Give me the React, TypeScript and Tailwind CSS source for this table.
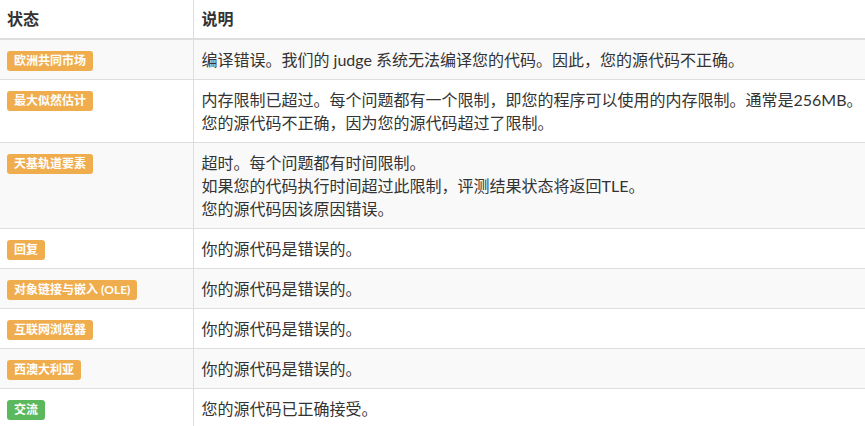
const rows = [
  { label: "欧洲共同市场", color: "bg-[#f0ad4e]", lines: ["编译错误。我们的 judge 系统无法编译您的代码。因此，您的源代码不正确。"] },
  { label: "最大似然估计", color: "bg-[#f0ad4e]", lines: ["内存限制已超过。每个问题都有一个限制，即您的程序可以使用的内存限制。通常是256MB。", "您的源代码不正确，因为您的源代码超过了限制。"] },
  { label: "天基轨道要素", color: "bg-[#f0ad4e]", lines: ["超时。每个问题都有时间限制。", "如果您的代码执行时间超过此限制，评测结果状态将返回TLE。", "您的源代码因该原因错误。"] },
  { label: "回复", color: "bg-[#f0ad4e]", lines: ["你的源代码是错误的。"] },
  { label: "对象链接与嵌入 (OLE)", color: "bg-[#f0ad4e]", lines: ["你的源代码是错误的。"] },
  { label: "互联网浏览器", color: "bg-[#f0ad4e]", lines: ["你的源代码是错误的。"] },
  { label: "西澳大利亚", color: "bg-[#f0ad4e]", lines: ["你的源代码是错误的。"] },
  { label: "交流", color: "bg-[#5cb85c]", lines: ["您的源代码已正确接受。"] },
]

function App() {
  return (
    <div className="w-[865px] h-[426px] overflow-hidden bg-white text-[#333] text-[16px] font-['Lato','Noto_Sans_CJK_SC',sans-serif]">
      <table className="w-full table-fixed border-collapse">
        <thead>
          <tr className="border-b-2 border-[#ddd]">
            <th className="w-[193px] border-r border-[#ddd] px-[7px] py-[8px] leading-[22px] text-left font-bold">状态</th>
            <th className="px-[8px] py-[8px] leading-[22px] text-left font-bold">说明</th>
          </tr>
        </thead>
        <tbody>
          {rows.map((row, i) => (
            <tr key={i} className={(i % 2 === 0 ? "bg-[#f9f9f9]" : "bg-white") + " border-b border-[#ddd]"}>
              <td className="border-r border-[#ddd] px-[7px] py-[8px] align-top">
                <span className={row.color + " mt-[3px] flex w-fit h-[20px] items-center rounded-[3px] px-[7px] text-[12px] font-bold leading-none text-white"}>
                  {row.label}
                </span>
              </td>
              <td className="px-[8px] py-[8px] leading-[23px] align-top whitespace-nowrap overflow-hidden">
                {row.lines.map((line, j) => (
                  <div key={j}>{line}</div>
                ))}
              </td>
            </tr>
          ))}
        </tbody>
      </table>
    </div>
  )
}

export default App
